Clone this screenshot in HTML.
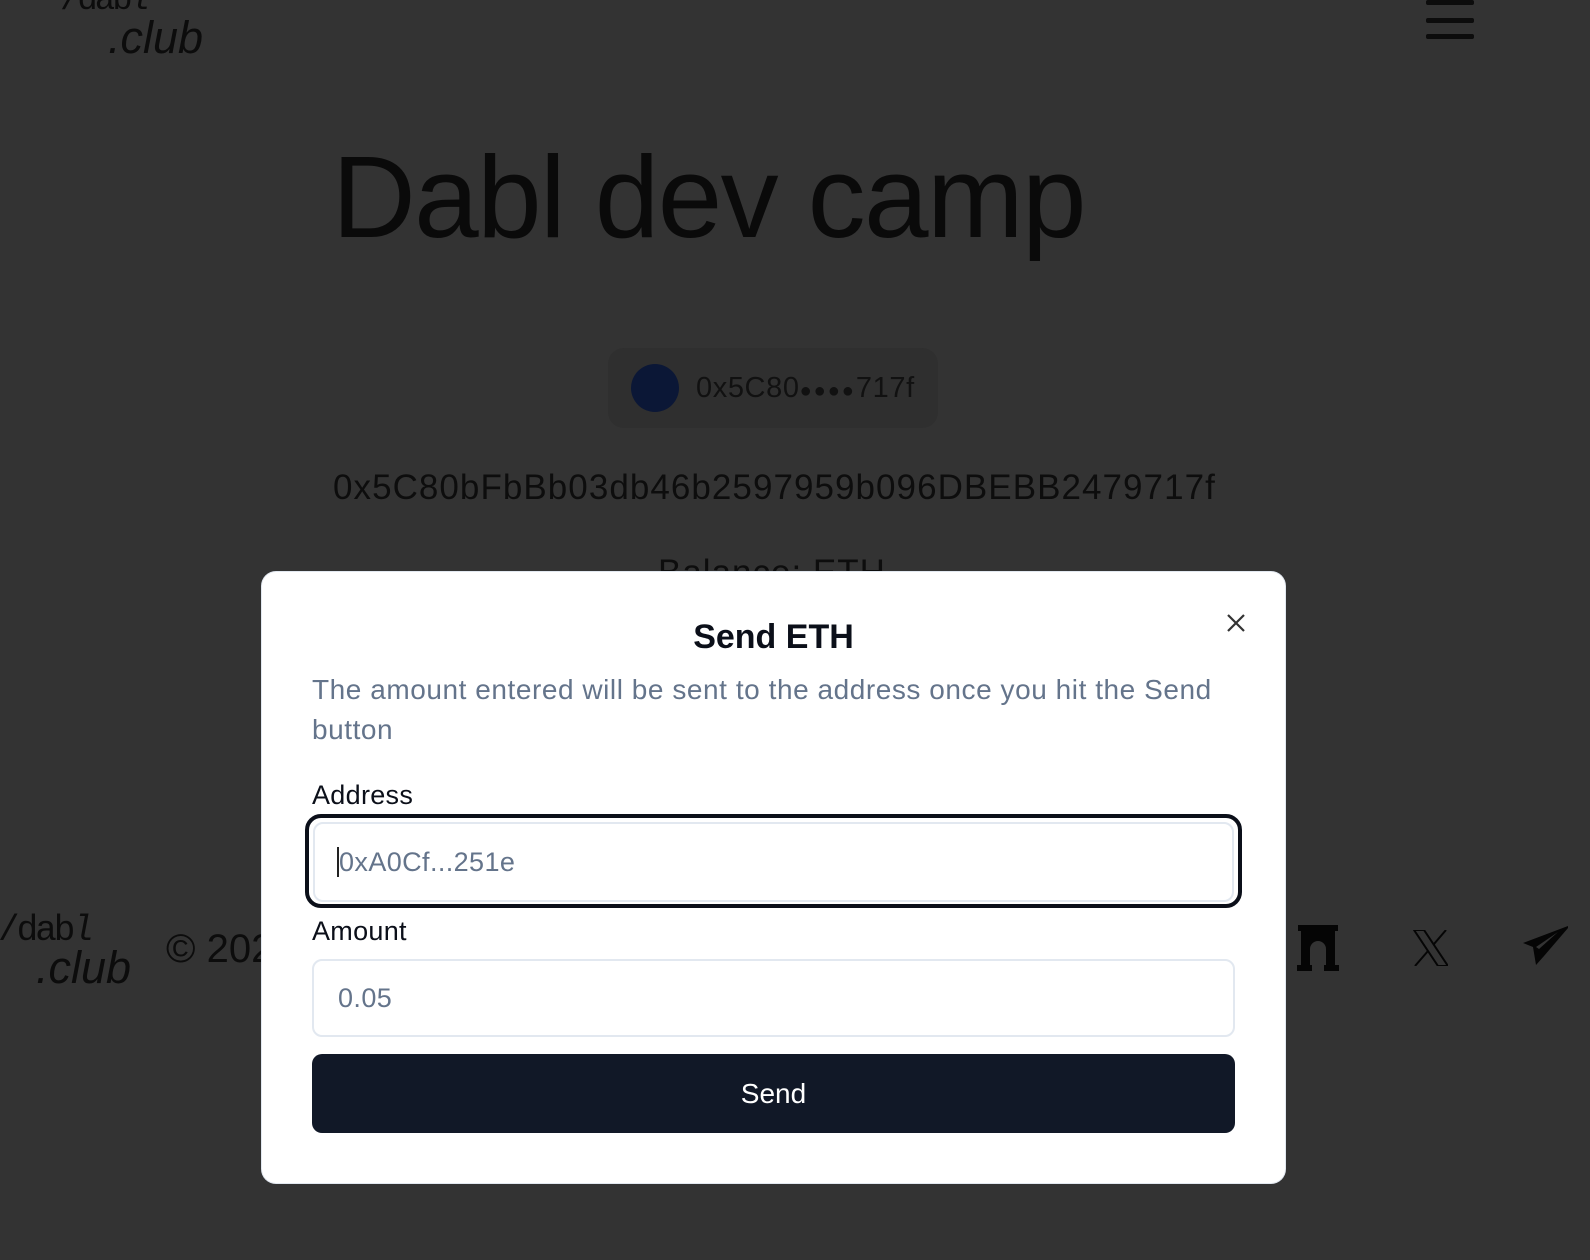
<!DOCTYPE html>
<html><head><meta charset="utf-8"><style>
html,body{margin:0;padding:0}
body{width:1590px;height:1260px;background:#333333;position:relative;overflow:hidden;font-family:"Liberation Sans",sans-serif}
.a{position:absolute;white-space:nowrap}
.logo{color:#0c0c0c;font-style:italic}
.modal{position:absolute;left:262px;top:572px;width:1023px;height:611px;background:#fff;border-radius:14px;box-shadow:0 0 0 1px #e2e8f0}
.lbl{position:absolute;left:50px;font-size:27px;color:#0b0f19;letter-spacing:0.3px}
.inp{position:absolute;left:50px;width:923px;border:2px solid #e2e8f0;border-radius:10px;background:#fff;font-size:27px;color:#64748b;box-sizing:border-box;padding-left:24px;letter-spacing:0.4px}
</style></head><body>
<div class="a" style="left:60px;top:-18px;font-size:34px;color:#0c0c0c;font-family:'Liberation Mono',monospace;letter-spacing:-3px">/dab<i>l</i></div>
<div class="a logo" style="left:108px;top:12px;font-size:45px">.club</div>
<div class="a" style="left:1426px;top:0px;width:48px;height:5px;background:#0c0c0c;border-radius:2px"></div>
<div class="a" style="left:1426px;top:18px;width:48px;height:5px;background:#0c0c0c;border-radius:2px"></div>
<div class="a" style="left:1426px;top:34px;width:48px;height:5px;background:#0c0c0c;border-radius:2px"></div>
<div class="a" style="left:332px;top:130px;font-size:116px;letter-spacing:-1.6px;color:#0a0a0a">Dabl dev camp</div>
<div class="a" style="left:608px;top:348px;width:330px;height:80px;background:#2f2f2f;border-radius:16px"></div>
<div class="a" style="left:631px;top:364px;width:48px;height:48px;border-radius:50%;background:#0b1736"></div>
<div class="a" style="left:696px;top:372px;font-size:29px;color:#111;letter-spacing:0.6px">0x5C80<span style="font-size:20px;letter-spacing:2px">●●●●</span>717f</div>
<div class="a" style="left:333px;top:468px;font-size:35px;color:#0d0d0d;letter-spacing:1.05px">0x5C80bFbBb03db46b2597959b096DBEBB2479717f</div>
<div class="a" style="left:658px;top:553px;font-size:35px;color:#0d0d0d;letter-spacing:1px">Balance: ETH</div>
<div class="a" style="left:-2px;top:910px;font-size:36px;color:#0c0c0c;font-family:'Liberation Mono',monospace;letter-spacing:-3px">/dab<i>l</i></div>
<div class="a logo" style="left:36px;top:942px;font-size:45px">.club</div>
<div class="a" style="left:166px;top:927px;font-size:40px;color:#0c0c0c">© 2024</div>
<svg class="a" style="left:1294px;top:925px" width="48" height="46" viewBox="0 0 48 46"><path d="M4 0h40v6h-3v34h4v6H30v-6h2V24a8 8 0 0 0-16 0v16h2v6H3v-6h4V6H4z" fill="#050505"/></svg>
<svg class="a" style="left:1413px;top:930px" width="35" height="36" viewBox="0 0 35 36"><path d="M1 0h10l24 36H25z" fill="none" stroke="#050505" stroke-width="2"/><path d="M33 0L21 14M2 36L15 21" stroke="#050505" stroke-width="2"/></svg>
<svg class="a" style="left:1522px;top:926px" width="48" height="40" viewBox="0 0 48 40"><path d="M46 0L1 17l10 4 3 18 8-9 24-28zM14 21l22-15-19 17z" fill="#050505"/></svg>
<div class="modal">
<div class="a" style="left:0;width:1023px;text-align:center;top:46px;font-size:34px;font-weight:bold;color:#0b0f19">Send ETH</div>
<svg class="a" style="left:964px;top:41px" width="20" height="20" viewBox="0 0 20 20"><path d="M2 2L18 18M18 2L2 18" stroke="#333" stroke-width="2.2"/></svg>
<div class="a" style="left:50px;top:98px;width:920px;white-space:normal;font-size:28px;line-height:40px;color:#64748b;letter-spacing:0.55px">The amount entered will be sent to the address once you hit the Send button</div>
<div class="lbl" style="top:208px">Address</div>
<div class="a" style="left:43px;top:242px;width:937px;height:94px;border:4px solid #0b0f19;border-radius:16px;box-sizing:border-box"></div>
<div class="inp" style="top:250px;height:80px;line-height:76px;width:921px;left:51px"><span style="border-left:2px solid #222;margin-left:-2px"></span>0xA0Cf...251e</div>
<div class="lbl" style="top:344px">Amount</div>
<div class="inp" style="top:387px;height:78px;line-height:74px">0.05</div>
<div class="a" style="left:50px;top:482px;width:923px;height:79px;background:#111827;border-radius:10px;color:#fff;font-size:28px;text-align:center;line-height:79px">Send</div>
</div>
</body></html>
